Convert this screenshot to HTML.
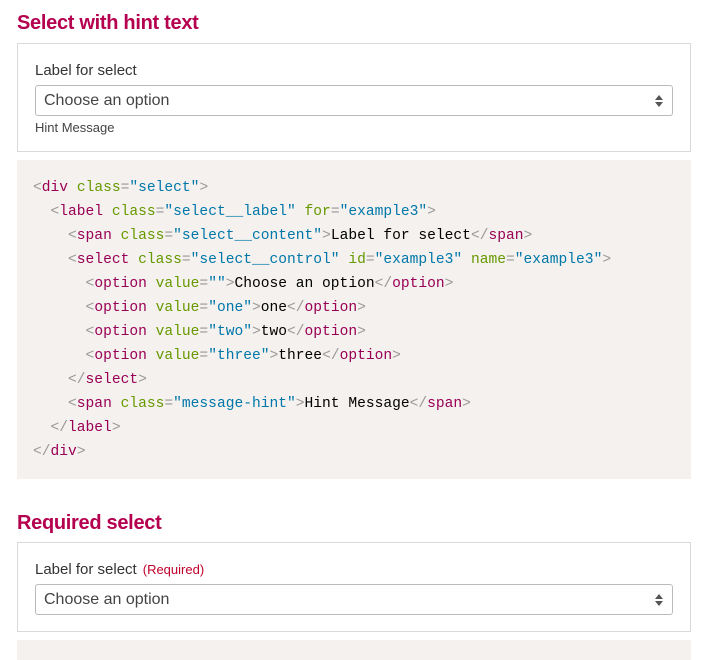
<!DOCTYPE html>
<html><head><style>
body{margin:0;background:#fff;font-family:"Liberation Sans",sans-serif;width:721px;height:657px;overflow:hidden;position:relative}
h2{position:absolute;left:17px;margin:0;font-size:20px;font-weight:bold;color:#b5004f;letter-spacing:-0.3px}
.box{position:absolute;left:17px;width:672px;border:1px solid #d9d9d9;background:#fff}
.lab{position:absolute;left:17px;font-size:15px;color:#333}
.sel{position:absolute;left:17px;width:638px;height:31px;border:1px solid #bbb;border-radius:3px;box-sizing:border-box;font-size:16px;color:#444;padding-left:8px;line-height:30px}
.hint{position:absolute;left:17px;font-size:13px;color:#444}
.code{position:absolute;left:17px;width:674px;background:#f4f1ee}
pre{margin:0;position:absolute;left:16px;top:16px;font-family:"Liberation Mono",monospace;font-size:14.6px;line-height:24px;color:#000}
.t{color:#990055}.a{color:#669900}.v{color:#07a}.p{color:#999}
.req{color:#c0002a;font-size:13px;margin-left:6px}
</style></head><body>
<h2 style="top:12px">Select with hint text</h2>
<div class="box" style="top:43px;height:107px">
<div class="lab" style="top:18px">Label for select</div>
<div class="sel" style="top:41px">Choose an option
<svg width="10" height="14" style="position:absolute;right:8px;top:8px"><path d="M1 6L5 1L9 6Z M1 8L5 13L9 8Z" fill="#555"/></svg></div>
<div class="hint" style="top:76px">Hint Message</div>
</div>
<div class="code" style="top:160px;height:319px"><pre><span class="p">&lt;</span><span class="t">div</span> <span class="a">class</span><span class="p">=</span><span class="v">"select"</span><span class="p">&gt;</span>
  <span class="p">&lt;</span><span class="t">label</span> <span class="a">class</span><span class="p">=</span><span class="v">"select__label"</span> <span class="a">for</span><span class="p">=</span><span class="v">"example3"</span><span class="p">&gt;</span>
    <span class="p">&lt;</span><span class="t">span</span> <span class="a">class</span><span class="p">=</span><span class="v">"select__content"</span><span class="p">&gt;</span>Label for select<span class="p">&lt;/</span><span class="t">span</span><span class="p">&gt;</span>
    <span class="p">&lt;</span><span class="t">select</span> <span class="a">class</span><span class="p">=</span><span class="v">"select__control"</span> <span class="a">id</span><span class="p">=</span><span class="v">"example3"</span> <span class="a">name</span><span class="p">=</span><span class="v">"example3"</span><span class="p">&gt;</span>
      <span class="p">&lt;</span><span class="t">option</span> <span class="a">value</span><span class="p">=</span><span class="v">""</span><span class="p">&gt;</span>Choose an option<span class="p">&lt;/</span><span class="t">option</span><span class="p">&gt;</span>
      <span class="p">&lt;</span><span class="t">option</span> <span class="a">value</span><span class="p">=</span><span class="v">"one"</span><span class="p">&gt;</span>one<span class="p">&lt;/</span><span class="t">option</span><span class="p">&gt;</span>
      <span class="p">&lt;</span><span class="t">option</span> <span class="a">value</span><span class="p">=</span><span class="v">"two"</span><span class="p">&gt;</span>two<span class="p">&lt;/</span><span class="t">option</span><span class="p">&gt;</span>
      <span class="p">&lt;</span><span class="t">option</span> <span class="a">value</span><span class="p">=</span><span class="v">"three"</span><span class="p">&gt;</span>three<span class="p">&lt;/</span><span class="t">option</span><span class="p">&gt;</span>
    <span class="p">&lt;/</span><span class="t">select</span><span class="p">&gt;</span>
    <span class="p">&lt;</span><span class="t">span</span> <span class="a">class</span><span class="p">=</span><span class="v">"message-hint"</span><span class="p">&gt;</span>Hint Message<span class="p">&lt;/</span><span class="t">span</span><span class="p">&gt;</span>
  <span class="p">&lt;/</span><span class="t">label</span><span class="p">&gt;</span>
<span class="p">&lt;/</span><span class="t">div</span><span class="p">&gt;</span></pre></div>
<h2 style="top:512px">Required select</h2>
<div class="box" style="top:542px;height:88px">
<div class="lab" style="top:18px">Label for select<span class="req">(Required)</span></div>
<div class="sel" style="top:41px">Choose an option
<svg width="10" height="14" style="position:absolute;right:8px;top:8px"><path d="M1 6L5 1L9 6Z M1 8L5 13L9 8Z" fill="#555"/></svg></div>
</div>
<div class="code" style="top:640px;height:20px"></div>
</body></html>
